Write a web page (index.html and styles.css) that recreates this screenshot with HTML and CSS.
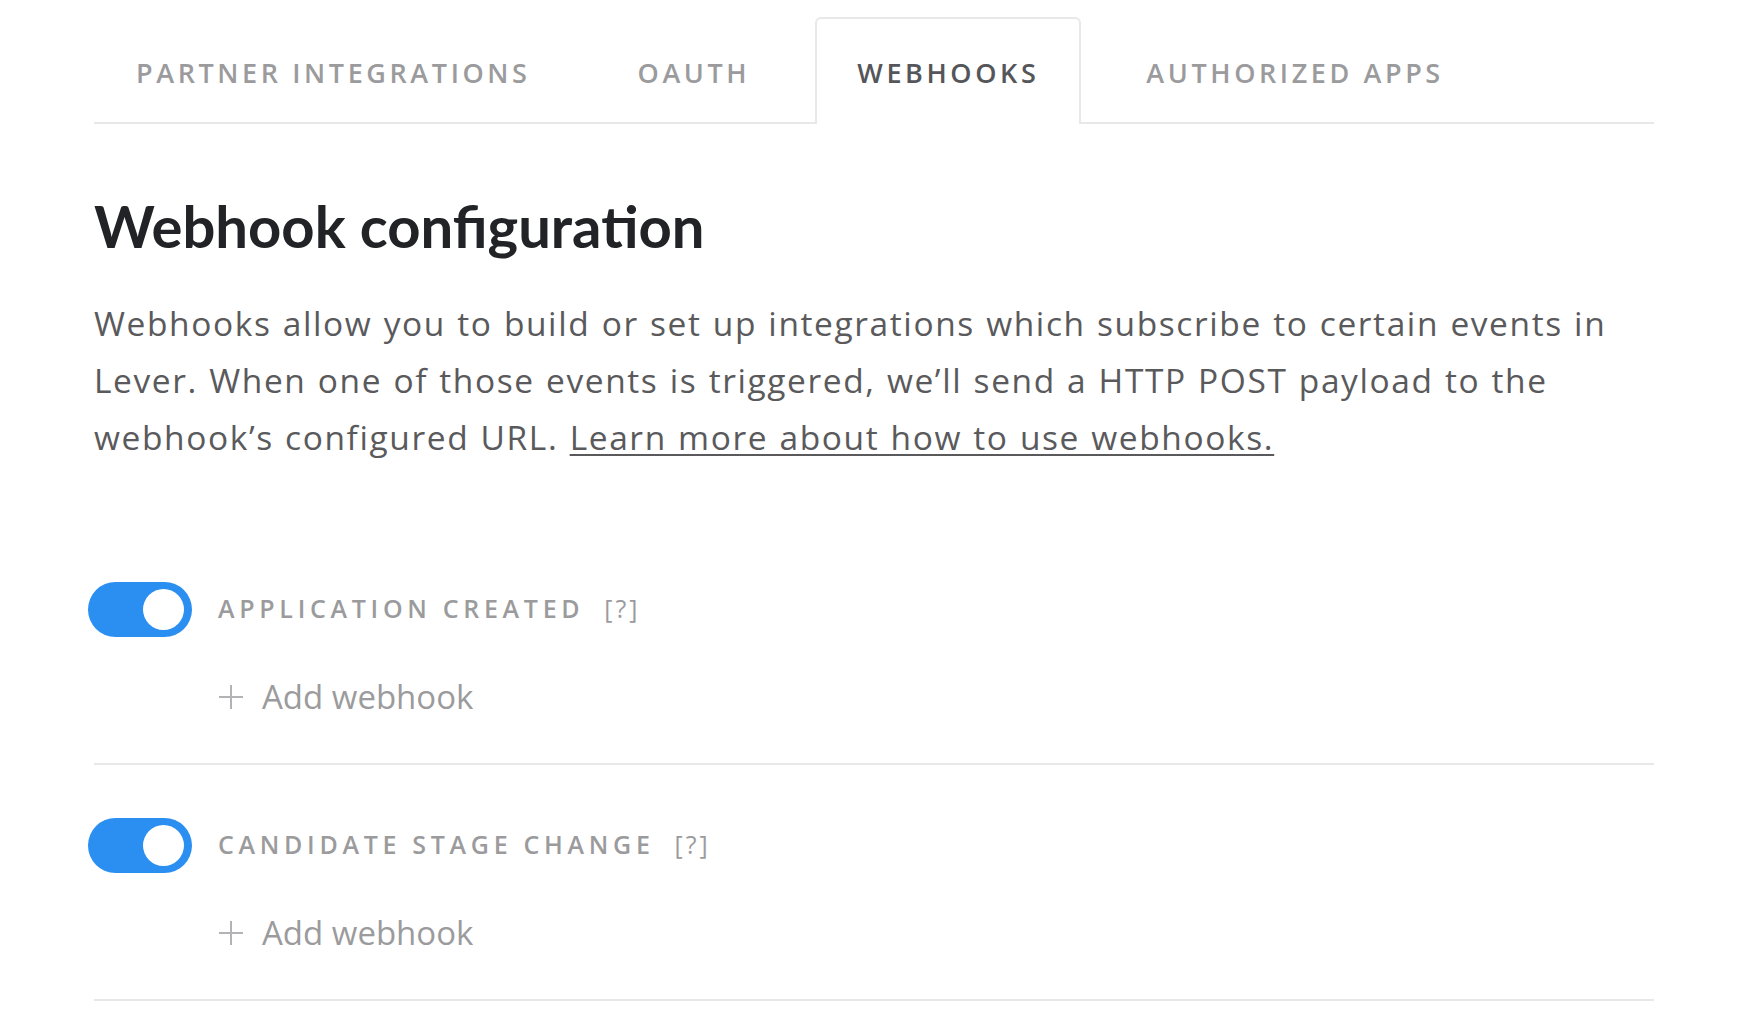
FILE: index.html
```html
<!DOCTYPE html>
<html>
    <head>
        <title>Integrations - Webhooks</title>
        <link rel="stylesheet" href="styles.css">
    </head>
    <body>
        <div class="page">
            <nav class="tabs">
                <a href="#" class="tab">Partner integrations</a>
                <a href="#" class="tab">OAuth</a>
                <a href="#" class="tab active">Webhooks</a>
                <a href="#" class="tab">Authorized apps</a>
            </nav>

            <section class="webhooks">
                <h1 class="webhooks-title">Webhook configuration</h1>
                <p class="webhooks-intro">
                    Webhooks allow you to build or set up integrations which subscribe to certain events in
                    Lever. When one of those events is triggered, we&rsquo;ll send a HTTP POST payload to the
                    webhook&rsquo;s configured URL. <a href="#">Learn more about how to use webhooks.</a>
                </p>

                <ul class="events">
                    <li class="event">
                        <div class="event-head">
                            <label class="switch">
                                <input type="checkbox" checked>
                                <span class="slider"></span>
                            </label>
                            <span class="event-name">Application created</span>
                            <span class="event-help">[?]</span>
                        </div>
                        <button type="button" class="add-webhook">
                            <svg viewBox="0 0 26 26" width="26" height="26"><path d="M13 1v24M1 13h24" /></svg>
                            Add webhook
                        </button>
                    </li>
                    <li class="event">
                        <div class="event-head">
                            <label class="switch">
                                <input type="checkbox" checked>
                                <span class="slider"></span>
                            </label>
                            <span class="event-name">Candidate stage change</span>
                            <span class="event-help">[?]</span>
                        </div>
                        <button type="button" class="add-webhook">
                            <svg viewBox="0 0 26 26" width="26" height="26"><path d="M13 1v24M1 13h24" /></svg>
                            Add webhook
                        </button>
                    </li>
                </ul>
            </section>
        </div>
    </body>
</html>
```

FILE: styles.css
```css
:root {
    --text-dark: #222326;
    --text-body: #5a5a5c;
    --text-muted: #9b9b9d;
    --line: #e8e8e8;
    --blue: #2b8ff1;
}

*, *::before, *::after {
    box-sizing: border-box;
}

body {
    margin: 0px;
    background-color: #fff;
    font-family: "Open Sans", "Noto Sans", sans-serif;
}

.page {
    width: 1560px;
    margin-left: 94px;
}

/* tabs */

.tabs {
    display: flex;
    gap: 23px;
    padding-top: 17px;
    border-bottom: 2px solid var(--line);
}

.tab {
    display: flex;
    align-items: center;
    height: 107px;
    margin-bottom: -2px;
    padding: 2px 40px 0px 40px;
    border: 2px solid transparent;
    border-bottom: none;
    border-radius: 6px 6px 0px 0px;
    font-size: 27px;
    font-weight: 600;
    letter-spacing: 3.6px;
    text-transform: uppercase;
    text-decoration: none;
    color: var(--text-muted);
}

.tab.active {
    border-color: var(--line);
    background-color: #fff;
    color: #55565a;
}

/* header text */

.webhooks-title {
    margin: 73px 0px 0px 0px;
    font-family: "Lato", sans-serif;
    font-size: 58px;
    font-weight: 700;
    line-height: 1;
    color: var(--text-dark);
}

.webhooks-intro {
    margin: 40px 0px 0px 0px;
    font-size: 33.5px;
    line-height: 57px;
    letter-spacing: 1.6px;
    word-spacing: 1px;
    color: var(--text-body);
}

.webhooks-intro a {
    color: var(--text-body);
    text-decoration: underline;
    text-underline-offset: 4px;
    text-decoration-thickness: 2px;
}

/* events */

.events {
    list-style: none;
    margin: 116px 0px 0px 0px;
    padding: 0px;
}

.event {
    padding-bottom: 44px;
    margin-bottom: 53px;
    border-bottom: 2px solid var(--line);
}

.event-head {
    display: flex;
    align-items: center;
    margin-left: -6px;
}

.switch {
    position: relative;
    display: inline-block;
    width: 104px;
    height: 55px;
    cursor: pointer;
}

.switch input {
    display: none;
}

.slider {
    position: absolute;
    top: 0;
    left: 0;
    right: 0;
    bottom: 0;
    border-radius: 28px;
    background-color: #ccc;
}

.slider::before {
    content: "";
    position: absolute;
    top: 7px;
    left: 7px;
    width: 41px;
    height: 41px;
    border-radius: 50%;
    background-color: #fff;
}

.switch input:checked + .slider {
    background-color: var(--blue);
}

.switch input:checked + .slider::before {
    left: 55px;
}

.event-name {
    margin-left: 26px;
    margin-bottom: 4px;
    font-size: 25px;
    font-weight: 600;
    letter-spacing: 4.7px;
    text-transform: uppercase;
    color: var(--text-muted);
}

.event-help {
    margin-left: 20px;
    margin-bottom: 4px;
    font-size: 25px;
    letter-spacing: 3px;
    color: var(--text-muted);
}

.add-webhook {
    display: flex;
    align-items: center;
    gap: 18px;
    margin: 37px 0px 0px 124px;
    padding: 0px;
    border: none;
    background: none;
    font-family: inherit;
    font-size: 33px;
    color: var(--text-muted);
    cursor: pointer;
}

.add-webhook svg {
    stroke: #b3b3b5;
    stroke-width: 2;
    fill: none;
}
```
